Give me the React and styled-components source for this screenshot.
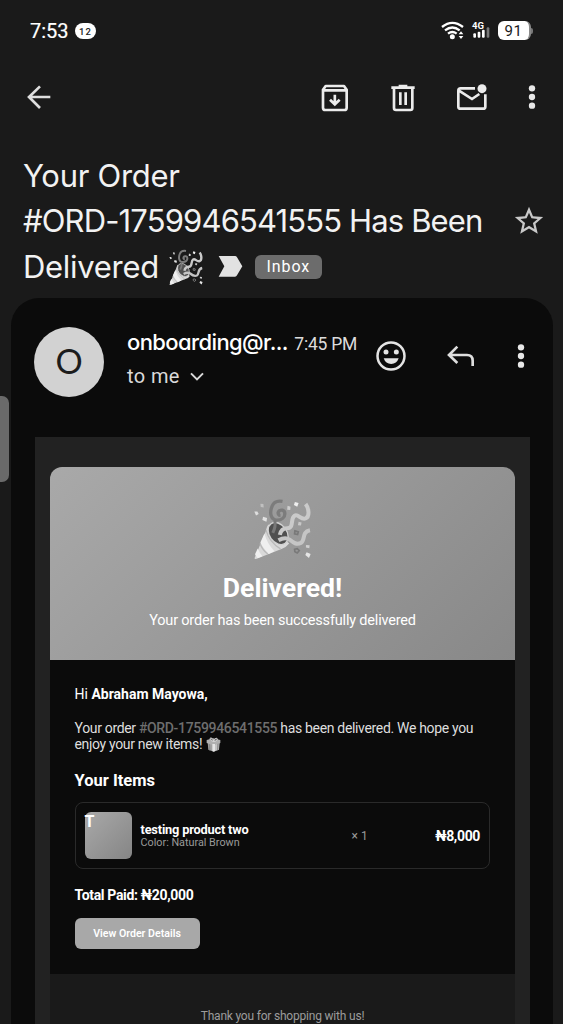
import styled, { createGlobalStyle } from "styled-components";
import { MdStarBorder } from "react-icons/md";

const GlobalStyle = createGlobalStyle`
  * {
    box-sizing: border-box;
    margin: 0;
    padding: 0;
  }
  body {
    background: #1a1a1a;
    color: #f2f2f2;
    font-family: Roboto, "Liberation Sans", sans-serif;
    overflow: hidden;
  }
  svg {
    display: block;
    flex: none;
  }
`;

const Popper = ({ size }) => (
  <svg width={size} height={size} viewBox="366 54 182 182" fill="none">
    <path d="M457 64q-24-4-31 14c-9 22-3 42 14 42 15 0 24-8 24-19 0-12-14-14-19-6-3 6 1 11 6 11" stroke="#7c7c7c" strokeWidth="10" />
    <path d="M415 133q-4 4-8 20l-33 79q-1 5 4 4l76-30q15-5 23-16z" fill="#d9d9d9" />
    <path d="M403 160q8 30 30 53l-17 8q-18-18-25-34zM383 205q6 14 14 23l-14 6q-6-8-8-12z" fill="#efefef" />
    <path d="M408 150q9 35 43 56M390 190q7 20 23 31" stroke="#b9b9b9" strokeWidth="4" />
    <ellipse cx="444" cy="160" rx="26" ry="36" transform="rotate(-36 444 160)" fill="#505050" stroke="#d2d2d2" strokeWidth="4" />
    <path d="M434 122q4 15-6 36" stroke="#787878" strokeWidth="9" />
    <path d="M449 164q4-20 22-20c22 0 8-28 22-37 11-7 18 13 33 8 12-4 11-28 0-43" stroke="#cacaca" strokeWidth="12" />
    <path d="M445 180q20-11 33-2c12 10 21 16 34 10 14-7 1-33 27-38" stroke="#c5c5c5" strokeWidth="12" />
    <path d="M494 152l10 3-2 8-9-2zM493 207l8-2 6 6-6 7-7-4z" stroke="#797979" strokeWidth="5" />
    <path d="M391 71l9 1 1 10-9-1z" fill="#c0c0c0" />
    <path d="M373 94l9 0 4 8-8 4z" fill="#dedede" />
    <path d="M399 110l12 4-2 11-12-5z" fill="#e2e2e2" />
    <path d="M472 77l9 3-1 10-9-1z" fill="#cfcfcf" />
    <path d="M494 66l11 3-4 11-10-5z" fill="#efefef" />
    <path d="M505 125l9 2-2 9-9-1z" fill="#c8c8c8" />
    <path d="M527 194l11 1-1 9-10-2z" fill="#cfcfcf" />
    <path d="M529 216l12 5-5 12-11-9z" fill="#e6e6e6" />
  </svg>
);

const Gift = () => (
  <svg width="15" height="15" viewBox="0 0 45 45">
    <path d="M5 16l18 7v21L7 38z" fill="#a2a2a2" />
    <path d="M23 23l18-7-2 22-16 6z" fill="#c2c2c2" />
    <path d="M2 9l20-5 21 5v9l-20 7L2 18z" fill="#b0b0b0" />
    <path d="M19 21l8 0v21l-4 2-4-2z" fill="#e5e5e5" />
    <path d="M8 20l4 2 1 19-4-2zM34 21l4-2-1 19-4 2z" fill="#8a8a8a" />
    <path d="M23 13C12 12 9 3 15 3s8 10 8 10 3-11 9-9-1 10-9 9z" fill="#777" stroke="#dcdcdc" strokeWidth="3" />
  </svg>
);

const WifiIcon = () => (
  <svg width="23" height="19" viewBox="478 61 69 57" fill="none" stroke="#fff" strokeWidth="7">
    <path d="M481 79q31-25 63 0M490 89q22-17 44 0M499 99q13-10 26 0" />
    <circle cx="512" cy="108" r="7.5" fill="#fff" stroke="none" />
    <path d="M538 92l7 9h-14zM538 115l7-9h-14z" fill="#fff" stroke="none" />
  </svg>
);

const BarsIcon = () => (
  <svg width="19" height="11" viewBox="572 82 57 33" fill="#fff">
    <rect x="576" y="101" width="8" height="13" rx="3" />
    <rect x="589" y="96" width="8" height="18" rx="3" />
    <rect x="602" y="90" width="8" height="24" rx="3" />
    <rect x="616" y="83" width="8" height="31" rx="3" fill="#777" />
  </svg>
);

const BackIcon = () => (
  <svg width="24" height="24" viewBox="83 254 72 72" fill="none" stroke="#dedede" strokeWidth="8">
    <path d="M122 258l-33 32 33 33M89 290h64" />
  </svg>
);

const ArchiveIcon = () => (
  <svg width="28" height="28" viewBox="117 251 84 84" fill="none" stroke="#ececec" strokeWidth="8">
    <path d="M123 268l8-11h55l8 11v54q0 7-7 7h-57q-7 0-7-7zM123 270h71" strokeLinejoin="round" />
    <path d="M158.500 283v28M144 298l14.500 14 14.500-14" />
  </svg>
);

const TrashIcon = () => (
  <svg width="24" height="28" viewBox="329 251 72 84" fill="none" stroke="#ececec" strokeWidth="8">
    <path d="M330 262h70M352 257h26M338 262v61q0 6 6 6h43q6 0 6-6v-61M357 276v38M373 276v38" />
  </svg>
);

const UnreadIcon = () => (
  <svg width="30" height="28" viewBox="527 249 90 84" fill="none" stroke="#ececec" strokeWidth="8">
    <path d="M581 262h-43q-7 0-7 7v48q0 6 7 6h67q7 0 7-6v-37M533 269l39 25 22-15" />
    <circle cx="602" cy="263" r="13.500" fill="#ececec" stroke="none" />
  </svg>
);

const MoreIcon = () => (
  <svg width="8" height="26" viewBox="0 0 24 78" fill="#e8e8e8">
    <circle cx="12" cy="13" r="9.500" />
    <circle cx="12" cy="39" r="9.500" />
    <circle cx="12" cy="65" r="9.500" />
  </svg>
);

const SmileIcon = () => (
  <svg width="30" height="30" viewBox="286 139 90 90" fill="#e4e4e4">
    <circle cx="331" cy="184" r="40.500" fill="none" stroke="#e4e4e4" strokeWidth="7.500" />
    <circle cx="316" cy="172" r="7.500" />
    <circle cx="347" cy="172" r="7.500" />
    <path d="M309 191h45q-6 17-22.500 17T309 191z" />
  </svg>
);

const ReplyIcon = () => (
  <svg width="28" height="22" viewBox="498 151 84 66" fill="none" stroke="#dedede" strokeWidth="8">
    <path d="M529 156l-25 25 25 24M504 181h54q17 0 17 17v16" />
  </svg>
);

const App = () => {
  return (
    <Screen>
      <GlobalStyle />
      <StatusBar>
        <Clock>7:53</Clock>
        <Count>12</Count>
        <Spacer />
        <WifiIcon />
        <Signal>
          <span>4G</span>
          <BarsIcon />
        </Signal>
        <Battery>
          <span>91</span>
        </Battery>
      </StatusBar>
      <Toolbar>
        <BackIcon />
        <Actions>
          <ArchiveIcon />
          <TrashIcon />
          <UnreadIcon />
        </Actions>
        <MoreIcon />
      </Toolbar>
      <Subject>
        <Title>
          <p>Your Order</p>
          <Wide>#ORD-1759946541555 Has Been</Wide>
          <TitleRow>
            <span>Delivered</span>
            <Popper size={36} />
            <svg width="25" height="21" viewBox="0 0 75 63">
              <path d="M2 0h49q4 0 6 4l16 27-16 27q-2 4-6 4H2l17-31z" fill="#e2e2e2" />
            </svg>
            <Label>Inbox</Label>
          </TitleRow>
        </Title>
        <MdStarBorder size={34} color="#c8c8c8" />
      </Subject>
      <Message>
        <Sender>
          <Avatar>O</Avatar>
          <From>
            <FromLine>
              <b>onboarding@r...</b>
              <time>7:45 PM</time>
            </FromLine>
            <ToLine>
              to me
              <svg width="14" height="9" viewBox="0 0 42 27" fill="none" stroke="#dadada" strokeWidth="6">
                <path d="M3 4l18 18L39 4" />
              </svg>
            </ToLine>
          </From>
          <SenderActions>
            <SmileIcon />
            <ReplyIcon />
            <MoreIcon />
          </SenderActions>
        </Sender>
        <Mail>
          <Hero>
            <Popper size={61} />
            <h1>Delivered!</h1>
            <p>Your order has been successfully delivered</p>
          </Hero>
          <Body>
            <Greeting>
              Hi <strong>Abraham Mayowa,</strong>
            </Greeting>
            <Text>
              Your order <OrderId>#ORD-1759946541555</OrderId> has been delivered. We hope you
              <TextLine>
                enjoy your new items! <Gift />
              </TextLine>
            </Text>
            <h2>Your Items</h2>
            <Item>
              <Thumb>T</Thumb>
              <ItemInfo>
                <b>testing product two</b>
                <span>Color: Natural Brown</span>
              </ItemInfo>
              <Quantity>× 1</Quantity>
              <Price>₦8,000</Price>
            </Item>
            <Total>Total Paid: ₦20,000</Total>
            <Button>View Order Details</Button>
          </Body>
          <Footer>Thank you for shopping with us!</Footer>
        </Mail>
      </Message>
      <EdgeHandle />
    </Screen>
  );
};

const Screen = styled.div`
  width: 563px;
  height: 1024px;
  display: flex;
  flex-direction: column;
  position: relative;
  overflow: hidden;
  background: #1a1a1a;
`;

const StatusBar = styled.header`
  height: 61px;
  flex: none;
  display: flex;
  align-items: center;
  padding: 0 30px;
  color: #fff;
`;

const Clock = styled.span`
  width: 39px;
  font-size: 20px;
  font-weight: 400;
  -webkit-text-stroke: 0.2px #fff;
`;

const Count = styled.span`
  width: 21px;
  height: 16px;
  margin-left: 6px;
  border-radius: 8px;
  background: #fff;
  color: #222;
  font-size: 9.5px;
  font-weight: 500;
  letter-spacing: 1px;
  line-height: 17px;
  text-align: center;
`;

const Spacer = styled.div`
  flex: 1;
`;

const Signal = styled.div`
  width: 19px;
  height: 20px;
  margin: 0 7px 0 8px;
  display: flex;
  flex-direction: column;
  span {
    height: 7px;
    font-size: 9.5px;
    font-weight: 700;
    line-height: 9px;
  }
  svg {
    margin-top: -1px;
  }
`;

const Battery = styled.div`
  display: flex;
  align-items: center;
  span {
    width: 33px;
    height: 19px;
    border-radius: 6px;
    border-right: 2px solid #8a8a8a;
    background: #fff;
    color: #1a1a1a;
    font-size: 15px;
    font-weight: 400;
    letter-spacing: 0.5px;
    line-height: 20px;
    text-align: center;
  }
  &::after {
    content: "";
    width: 2px;
    height: 6px;
    border-radius: 0 2px 2px 0;
    background: #777;
  }
`;

const Toolbar = styled.nav`
  height: 72px;
  flex: none;
  display: flex;
  align-items: center;
  padding: 0 27px;
`;

const Actions = styled.div`
  display: flex;
  align-items: center;
  margin: 0 41px 0 auto;
  padding-top: 1px;
  gap: 42px;
`;

const Subject = styled.section`
  height: 165px;
  flex: none;
  display: flex;
  align-items: center;
  justify-content: space-between;
  padding: 10px 17px 0 23px;
`;

const Title = styled.div`
  font-family: Inter, sans-serif;
  font-size: 31px;
  line-height: 45.5px;
  letter-spacing: -0.3px;
  padding-top: 1px;
  white-space: nowrap;
`;

const Wide = styled.p`
  letter-spacing: -0.86px;
`;

const TitleRow = styled.div`
  display: flex;
  align-items: center;
  svg:nth-of-type(1) {
    margin-left: 9px;
  }
  svg:nth-of-type(2) {
    margin-left: 14px;
  }
`;

const Label = styled.span`
  width: 67px;
  height: 24px;
  margin-left: 12px;
  border-radius: 6px;
  background: #6c6c6c;
  color: #fff;
  font-family: Roboto, sans-serif;
  font-size: 16px;
  letter-spacing: 0.9px;
  line-height: 24px;
  text-align: center;
`;

const Message = styled.main`
  flex: 1;
  margin: 0 10px 0 11px;
  border-radius: 28px 28px 0 0;
  background: #0b0b0b;
  display: flex;
  flex-direction: column;
`;

const Sender = styled.div`
  height: 139px;
  flex: none;
  display: flex;
  align-items: flex-start;
  padding: 29px 28px 0 23px;
`;

const Avatar = styled.div`
  width: 70px;
  height: 70px;
  flex: none;
  border-radius: 50%;
  background: #d2d2d2;
  color: #1c1c1c;
  font-family: Lato, sans-serif;
  font-size: 34px;
  line-height: 68px;
  text-align: center;
`;

const From = styled.div`
  width: 230px;
  flex: none;
  margin-left: 23px;
  white-space: nowrap;
`;

const FromLine = styled.div`
  height: 31px;
  display: flex;
  align-items: baseline;
  justify-content: space-between;
  b {
    color: #fff;
    font-family: Inter, sans-serif;
    font-feature-settings: "cv11";
    font-size: 22px;
    font-weight: 500;
    letter-spacing: -0.6px;
    line-height: 31px;
  }
  time {
    color: #dcdcdc;
    font-size: 17.5px;
    letter-spacing: -0.25px;
  }
`;

const ToLine = styled.div`
  height: 36px;
  display: flex;
  align-items: center;
  gap: 10px;
  color: #dadada;
  font-size: 20px;
  letter-spacing: 0.4px;
`;

const SenderActions = styled.div`
  flex: 1;
  height: 58px;
  display: flex;
  align-items: center;
  justify-content: space-between;
  margin-left: 19px;
  svg:nth-child(2) {
    margin-right: 2px;
  }
`;

const Mail = styled.article`
  flex: 1;
  margin: 0 23px 0 24px;
  padding: 30px 15px 0;
  background: #222;
  display: flex;
  flex-direction: column;
`;

const Hero = styled.div`
  height: 193px;
  flex: none;
  display: flex;
  flex-direction: column;
  align-items: center;
  padding-top: 31px;
  border-radius: 12px 12px 0 0;
  background: linear-gradient(135deg, #a9a9a9, #888);
  color: #fff;
  h1 {
    margin-top: 13px;
    font-size: 26.6px;
    line-height: 32px;
  }
  p {
    margin-top: 7px;
    font-size: 14.5px;
    letter-spacing: -0.19px;
    line-height: 20px;
  }
`;

const Body = styled.div`
  height: 314px;
  flex: none;
  padding: 26px 25px 0 24.5px;
  background: #0b0b0b;
  h2 {
    margin-top: 19px;
    color: #fff;
    font-size: 16.5px;
    line-height: 20px;
  }
`;

const Greeting = styled.p`
  color: #fff;
  font-size: 14px;
  line-height: 16px;
`;

const Text = styled.div`
  margin-top: 18px;
  color: #dedede;
  font-size: 14px;
  letter-spacing: -0.33px;
  line-height: 16px;
  white-space: nowrap;
`;

const TextLine = styled.span`
  display: flex;
  align-items: center;
  gap: 4px;
`;

const OrderId = styled.span`
  color: #6e6e6e;
  font-weight: 500;
`;

const Item = styled.div`
  height: 67px;
  margin-top: 11px;
  padding: 0 9px;
  display: flex;
  align-items: center;
  border: 1px solid #2a2a2a;
  border-radius: 8px;
`;

const Thumb = styled.div`
  width: 47px;
  height: 47px;
  flex: none;
  border-radius: 6px;
  background: linear-gradient(135deg, #a9a9a9, #858585);
  color: #fff;
  font-size: 16px;
  font-weight: 700;
  line-height: 19px;
`;

const ItemInfo = styled.div`
  width: 211px;
  margin-left: 9px;
  display: flex;
  flex-direction: column;
  b {
    color: #fff;
    font-size: 12.8px;
    letter-spacing: -0.19px;
    line-height: 13px;
  }
  span {
    color: #9a9a9a;
    font-size: 10.8px;
    line-height: 13px;
  }
`;

const Quantity = styled.span`
  color: #9a9a9a;
  font-size: 12px;
`;

const Price = styled.b`
  margin-left: auto;
  color: #fff;
  font-size: 14px;
  letter-spacing: -0.35px;
`;

const Total = styled.p`
  margin-top: 17px;
  color: #fff;
  font-size: 14px;
  font-weight: 700;
  letter-spacing: -0.33px;
  line-height: 18px;
`;

const Button = styled.button`
  display: block;
  width: 125px;
  height: 31px;
  margin-top: 14px;
  border: none;
  border-radius: 6px;
  background: #a8a8a8;
  color: #fff;
  font-family: inherit;
  font-size: 10.6px;
  font-weight: 600;
`;

const Footer = styled.footer`
  flex: 1;
  padding-top: 34px;
  background: #1a1a1a;
  color: #9c9c9c;
  font-size: 12px;
  letter-spacing: -0.2px;
  line-height: 17px;
  text-align: center;
`;

const EdgeHandle = styled.div`
  position: absolute;
  left: 0;
  top: 396px;
  width: 9px;
  height: 86px;
  border-radius: 0 7px 7px 0;
  background: #6a6a6a;
`;

export default App;
